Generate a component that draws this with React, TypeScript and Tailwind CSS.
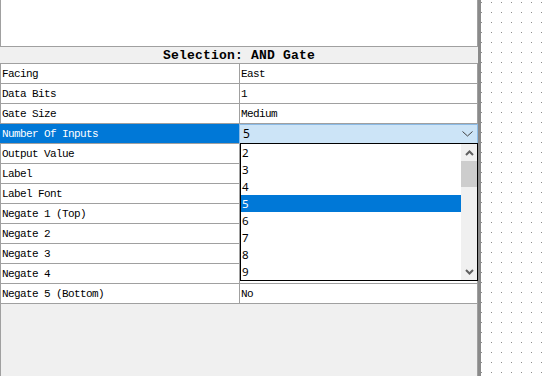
import React from "react";

const rows: { label: string; value: string }[] = [
  { label: "Facing", value: "East" },
  { label: "Data Bits", value: "1" },
  { label: "Gate Size", value: "Medium" },
  { label: "Number Of Inputs", value: "" },
  { label: "Output Value", value: "" },
  { label: "Label", value: "" },
  { label: "Label Font", value: "" },
  { label: "Negate 1 (Top)", value: "" },
  { label: "Negate 2", value: "" },
  { label: "Negate 3", value: "" },
  { label: "Negate 4", value: "" },
  { label: "Negate 5 (Bottom)", value: "No" },
];

const items = ["2", "3", "4", "5", "6", "7", "8", "9"];

const mono = {
  fontFamily: '"Liberation Mono", "DejaVu Sans Mono", monospace',
};

export default function App() {
  return (
    <div className="flex w-[548px] h-[376px] overflow-hidden bg-white">
      <div className="relative flex flex-col w-[478px] h-full shrink-0">
        <div className="h-[47px] bg-white border-l border-r border-b border-[#a0a0a0]" />
        <div
          className="h-[17px] bg-[#f0f0f0] border-b border-[#a0a0a0] flex items-center justify-center pt-[1px] text-[13px] font-bold tracking-[0.2px] text-black leading-none"
          style={mono}
        >
          Selection: AND Gate
        </div>
        {rows.map((r) => {
          const sel = r.label === "Number Of Inputs";
          return (
            <div
              key={r.label}
              className="flex h-[20px] border-b border-[#a0a0a0] text-[11px] tracking-[-0.6px] leading-none"
              style={mono}
            >
              <div
                className={
                  sel
                    ? "w-[240px] shrink-0 flex items-center pl-[1px] pt-[2px] bg-[#0078d7] text-white border-l border-l-[#0078d7] border-r border-r-[#a0a0a0]"
                    : "w-[240px] shrink-0 flex items-center pl-[1px] pt-[2px] bg-white text-black border-l border-r border-[#a0a0a0]"
                }
              >
                {r.label}
              </div>
              <div className="flex-1 flex items-center pl-[1px] pt-[2px] bg-white text-black border-r border-[#a0a0a0]">
                {r.value}
              </div>
            </div>
          );
        })}
        <div className="flex-1 bg-[#f0f0f0] border-l border-r border-[#a0a0a0]" />

        {/* combo box */}
        <div
          className="absolute left-[239px] top-[124px] w-[239px] h-[20px] bg-[#cce4f7] border border-[#8cbbe6] flex items-center justify-between pl-[3px] pr-[4px] text-[12px] text-black"
          style={{ fontFamily: '"Noto Sans", "Open Sans", sans-serif' }}
        >
          <span className="leading-none">5</span>
          <svg width="11" height="6" viewBox="0 0 11 6">
            <polyline points="0.5,0.5 5.5,5 10.5,0.5" fill="none" stroke="#404040" strokeWidth="1" />
          </svg>
        </div>

        {/* dropdown list */}
        <div
          className="absolute left-[240px] top-[143px] w-[238px] h-[138px] bg-white border border-black flex"
          style={{ fontFamily: '"Noto Sans", "Open Sans", sans-serif' }}
        >
          <div className="w-[220px] flex flex-col">
            {items.map((it) => (
              <div
                key={it}
                className={
                  it === "5"
                    ? "h-[17px] flex items-center pl-[1px] text-[11.5px] leading-none bg-[#0078d7] text-white"
                    : "h-[17px] flex items-center pl-[1px] text-[11.5px] leading-none text-black"
                }
              >
                {it}
              </div>
            ))}
          </div>
          <div className="w-[16px] bg-[#f0f0f0] flex flex-col">
            <div className="h-[17px] flex items-center justify-center">
              <svg width="9" height="6" viewBox="0 0 9 6">
                <polyline points="1,5 4.5,1.5 8,5" fill="none" stroke="#606060" strokeWidth="2" />
              </svg>
            </div>
            <div className="h-[26px] bg-[#cdcdcd]" />
            <div className="flex-1" />
            <div className="h-[17px] flex items-center justify-center">
              <svg width="9" height="6" viewBox="0 0 9 6">
                <polyline points="1,1 4.5,4.5 8,1" fill="none" stroke="#606060" strokeWidth="2" />
              </svg>
            </div>
          </div>
        </div>
      </div>
      <div className="w-[3px] h-full bg-[#8a8a8a] shrink-0" />
      <div className="flex-1 h-full bg-white">
        <svg width="100%" height="100%">
          <defs>
            <pattern id="dots" x="0" y="2" width="10" height="10" patternUnits="userSpaceOnUse">
              <rect x="0" y="0" width="1" height="1" fill="#8c8c8c" />
            </pattern>
          </defs>
          <rect width="100%" height="100%" fill="url(#dots)" />
        </svg>
      </div>
    </div>
  );
}
